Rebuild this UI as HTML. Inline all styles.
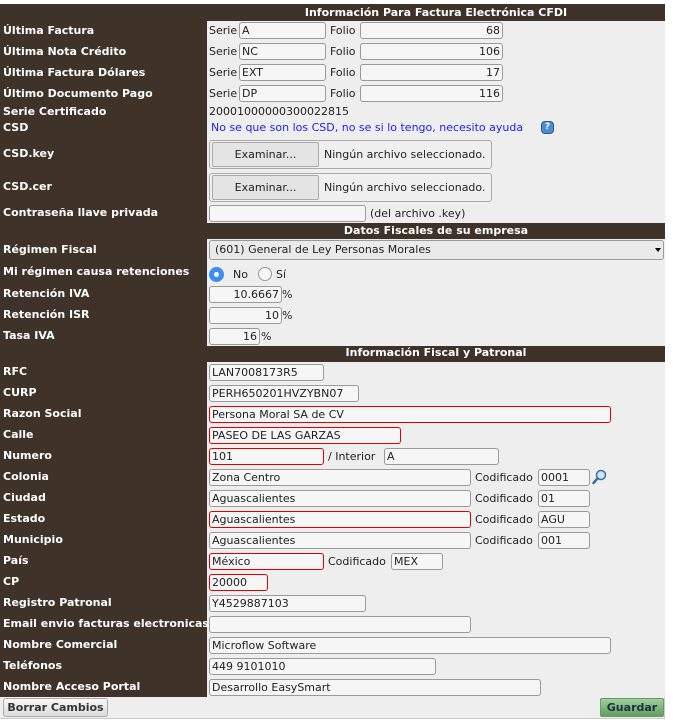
<!DOCTYPE html>
<html><head><meta charset="utf-8"><style>
*{margin:0;padding:0;box-sizing:border-box}
body{width:673px;height:723px;background:#fff;position:relative;font-family:"DejaVu Sans","Liberation Sans",sans-serif;font-size:11px;color:#222;overflow:hidden}
.a{position:absolute}
.dark{background:#3e3229}
.gray{background:#eeeeee}
.l{position:absolute;left:3px;color:#fff;font-weight:bold;line-height:14px;white-space:nowrap}
.h{position:absolute;color:#fff;font-weight:bold;line-height:14px;text-align:center;white-space:nowrap}
.i{position:absolute;height:17px;border:1px solid #9a9a9a;border-radius:3px;background:#f6f6f6;line-height:15px;padding:0 2px;white-space:nowrap;overflow:hidden}
.r{border-color:#e00000}
.ra{text-align:right}
.t{position:absolute;line-height:14px;white-space:nowrap}
</style></head><body>
<div class="a dark" style="left:0;top:4px;width:665px;height:694px"></div>
<div class="a gray" style="left:207px;top:21px;width:458px;height:202px"></div>
<div class="a gray" style="left:207px;top:239px;width:458px;height:107px"></div>
<div class="a gray" style="left:207px;top:362px;width:458px;height:336px"></div>
<div class="a gray" style="left:0;top:697px;width:665px;height:22px;border-right:1px solid #ccc;border-bottom:1px solid #ccc"></div>

<div class="h" style="left:207px;width:458px;top:6px">Información Para Factura Electrónica CFDI</div>
<div class="h" style="left:207px;width:458px;top:224px">Datos Fiscales de su empresa</div>
<div class="h" style="left:207px;width:458px;top:346px">Información Fiscal y Patronal</div>

<div class="l" style="top:24px">Última Factura</div>
<div class="l" style="top:45px">Última Nota Crédito</div>
<div class="l" style="top:66px">Última Factura Dólares</div>
<div class="l" style="top:87px">Último Documento Pago</div>
<div class="l" style="top:105px">Serie Certificado</div>
<div class="l" style="top:121px">CSD</div>
<div class="l" style="top:147px">CSD.key</div>
<div class="l" style="top:180px">CSD.cer</div>
<div class="l" style="top:206px">Contraseña llave privada</div>
<div class="l" style="top:243px">Régimen Fiscal</div>
<div class="l" style="top:265px">Mi régimen causa retenciones</div>
<div class="l" style="top:287px">Retención IVA</div>
<div class="l" style="top:308px">Retención ISR</div>
<div class="l" style="top:329px">Tasa IVA</div>
<div class="l" style="top:365px">RFC</div>
<div class="l" style="top:386px">CURP</div>
<div class="l" style="top:407px">Razon Social</div>
<div class="l" style="top:428px">Calle</div>
<div class="l" style="top:449px">Numero</div>
<div class="l" style="top:470px">Colonia</div>
<div class="l" style="top:491px">Ciudad</div>
<div class="l" style="top:512px">Estado</div>
<div class="l" style="top:533px">Municipio</div>
<div class="l" style="top:554px">País</div>
<div class="l" style="top:575px">CP</div>
<div class="l" style="top:596px">Registro Patronal</div>
<div class="l" style="top:617px">Email envio facturas electronicas</div>
<div class="l" style="top:638px">Nombre Comercial</div>
<div class="l" style="top:659px">Teléfonos</div>
<div class="l" style="top:680px">Nombre Acceso Portal</div>

<!-- series -->
<div class="t" style="left:209px;top:24px">Serie</div><div class="i" style="left:239px;top:22px;width:87px">A</div><div class="t" style="left:330px;top:24px">Folio</div><div class="i ra" style="left:360px;top:22px;width:143px">68</div>
<div class="t" style="left:209px;top:45px">Serie</div><div class="i" style="left:239px;top:43px;width:87px">NC</div><div class="t" style="left:330px;top:45px">Folio</div><div class="i ra" style="left:360px;top:43px;width:143px">106</div>
<div class="t" style="left:209px;top:66px">Serie</div><div class="i" style="left:239px;top:64px;width:87px">EXT</div><div class="t" style="left:330px;top:66px">Folio</div><div class="i ra" style="left:360px;top:64px;width:143px">17</div>
<div class="t" style="left:209px;top:87px">Serie</div><div class="i" style="left:239px;top:85px;width:87px">DP</div><div class="t" style="left:330px;top:87px">Folio</div><div class="i ra" style="left:360px;top:85px;width:143px">116</div>
<div class="t" style="left:209px;top:105px">20001000000300022815</div>
<div class="t" style="left:211px;top:121px;color:#2020ee">No se que son los CSD, no se si lo tengo, necesito ayuda</div>
<div class="a" style="left:541px;top:121px;width:13px;height:13px;border-radius:4px;background:#4a8fd6;border:1px solid #2a5a90;color:#fff;font-size:9px;font-weight:bold;text-align:center;line-height:11px">?</div>

<div class="a" style="left:209px;top:140px;width:283px;height:29px;border:1px solid #aaa;border-radius:3px;background:#f0f0f0"></div>
<div class="a" style="left:212px;top:142px;width:107px;height:25px;border:1px solid #aaa;border-radius:2px;background:#e4e4e4;text-align:center;line-height:23px">Examinar...</div>
<div class="t" style="left:324px;top:148px">Ningún archivo seleccionado.</div>
<div class="a" style="left:209px;top:173px;width:283px;height:29px;border:1px solid #aaa;border-radius:3px;background:#f0f0f0"></div>
<div class="a" style="left:212px;top:175px;width:107px;height:25px;border:1px solid #aaa;border-radius:2px;background:#e4e4e4;text-align:center;line-height:23px">Examinar...</div>
<div class="t" style="left:324px;top:181px">Ningún archivo seleccionado.</div>
<div class="i" style="left:209px;top:205px;width:157px"></div>
<div class="t" style="left:370px;top:207px">(del archivo .key)</div>

<div class="i" style="left:209px;top:240px;width:455px;height:20px;line-height:18px;padding-left:5px;background:#eaeaea">(601) General de Ley Personas Morales</div>
<div class="a" style="left:655px;top:248px;width:0;height:0;border-left:3px solid transparent;border-right:3px solid transparent;border-top:4px solid #000"></div>

<div class="a" style="left:209px;top:267px;width:15px;height:15px;border-radius:50%;background:#3b8ef0"></div>
<div class="a" style="left:214px;top:272px;width:5px;height:5px;border-radius:50%;background:#fff"></div>
<div class="t" style="left:233px;top:268px">No</div>
<div class="a" style="left:258px;top:267px;width:14px;height:14px;border-radius:50%;border:1px solid #999;background:#f6f6f6"></div>
<div class="t" style="left:276px;top:268px">Sí</div>

<div class="i ra" style="left:209px;top:286px;width:73px">10.6667</div><div class="t" style="left:282px;top:288px">%</div>
<div class="i ra" style="left:209px;top:307px;width:73px">10</div><div class="t" style="left:282px;top:309px">%</div>
<div class="i ra" style="left:209px;top:328px;width:51px">16</div><div class="t" style="left:261px;top:330px">%</div>

<div class="i" style="left:209px;top:364px;width:115px">LAN7008173R5</div>
<div class="i" style="left:209px;top:385px;width:150px">PERH650201HVZYBN07</div>
<div class="i r" style="left:209px;top:406px;width:402px">Persona Moral SA de CV</div>
<div class="i r" style="left:209px;top:427px;width:192px">PASEO DE LAS GARZAS</div>
<div class="i r" style="left:209px;top:448px;width:115px">101</div><div class="t" style="left:328px;top:450px">/ Interior</div><div class="i" style="left:384px;top:448px;width:115px">A</div>
<div class="i" style="left:209px;top:469px;width:262px">Zona Centro</div><div class="t" style="left:475px;top:471px">Codificado</div><div class="i" style="left:538px;top:469px;width:52px">0001</div>
<svg class="a" style="left:592px;top:469px" width="15" height="16" viewBox="0 0 15 16"><circle cx="9" cy="6" r="4.5" fill="#cfe6f7" stroke="#3b6ea5" stroke-width="1.5"/><line x1="5.5" y1="9.5" x2="1.5" y2="14" stroke="#3b6ea5" stroke-width="2.5" stroke-linecap="round"/></svg>
<div class="i" style="left:209px;top:490px;width:262px">Aguascalientes</div><div class="t" style="left:475px;top:492px">Codificado</div><div class="i" style="left:538px;top:490px;width:52px">01</div>
<div class="i r" style="left:209px;top:511px;width:262px">Aguascalientes</div><div class="t" style="left:475px;top:513px">Codificado</div><div class="i" style="left:538px;top:511px;width:52px">AGU</div>
<div class="i" style="left:209px;top:532px;width:262px">Aguascalientes</div><div class="t" style="left:475px;top:534px">Codificado</div><div class="i" style="left:538px;top:532px;width:52px">001</div>
<div class="i r" style="left:209px;top:553px;width:115px">México</div><div class="t" style="left:328px;top:555px">Codificado</div><div class="i" style="left:391px;top:553px;width:52px">MEX</div>
<div class="i r" style="left:209px;top:574px;width:59px">20000</div>
<div class="i" style="left:209px;top:595px;width:157px">Y4529887103</div>
<div class="i" style="left:209px;top:616px;width:262px"></div>
<div class="i" style="left:209px;top:637px;width:402px">Microflow Software</div>
<div class="i" style="left:209px;top:658px;width:227px">449 9101010</div>
<div class="i" style="left:209px;top:679px;width:332px">Desarrollo EasySmart</div>

<div class="a" style="left:3px;top:698px;width:105px;height:19px;border:1px solid #aaa;border-radius:3px;background:linear-gradient(#f8f8f8,#dcdcdc);font-weight:bold;color:#333;text-align:center;line-height:17px">Borrar Cambios</div>
<div class="a" style="left:600px;top:698px;width:64px;height:19px;border:1px solid #6a9a6a;border-radius:2px;background:linear-gradient(#9fd09f,#5f9f60);font-weight:bold;color:#1f2f3f;text-align:center;line-height:17px">Guardar</div>
</body></html>
